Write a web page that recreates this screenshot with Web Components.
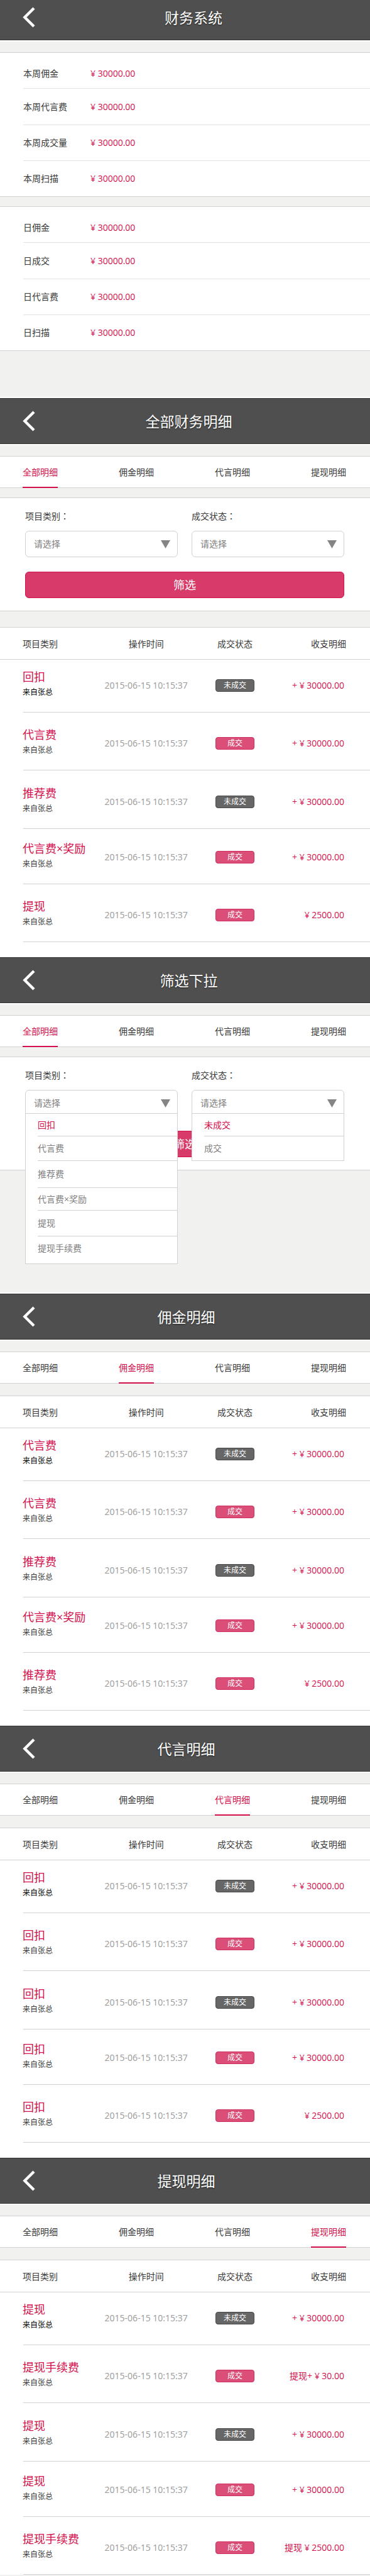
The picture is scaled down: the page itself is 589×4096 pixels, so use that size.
<!DOCTYPE html>
<html lang="zh-CN">
<head>
<meta charset="utf-8">
<meta name="viewport" content="width=device-width, initial-scale=1">
<title>财务系统</title>
<style>
  :root {
    --accent: #d3104b;
    --line: #d2d2d2;
    --ink: #3a3a3a;
    --muted: #808080;
    --canvas: #f1f1ef;
  }
  body {
    margin: 0;
    background: var(--canvas);
    color: var(--ink);
    font: 14px/20px "Open Sans", "Noto Sans CJK SC", sans-serif;
  }
  .overview { padding-bottom: 75px; }
  .dropdowns { padding-bottom: 196px; }
  app-screen:last-of-type { --tail: 0; }
</style>
</head>
<body>

<app-screen class="overview" heading="财务系统" variant="root">
  <stat-list items="本周佣金,本周代言费,本周成交量,本周扫描"></stat-list>
  <stat-list items="日佣金,日成交,日代言费,日扫描"></stat-list>
</app-screen>

<app-screen heading="全部财务明细" variant="filter">
  <tab-bar current="0"></tab-bar>
  <filter-form></filter-form>
  <ledger-table source="all" spaced></ledger-table>
</app-screen>

<app-screen class="dropdowns" heading="筛选下拉" variant="filter">
  <tab-bar current="0"></tab-bar>
  <filter-form expanded></filter-form>
</app-screen>

<app-screen heading="佣金明细">
  <tab-bar current="1"></tab-bar>
  <ledger-table source="commission"></ledger-table>
</app-screen>

<app-screen heading="代言明细">
  <tab-bar current="2"></tab-bar>
  <ledger-table source="endorsement"></ledger-table>
</app-screen>

<app-screen heading="提现明细">
  <tab-bar current="3"></tab-bar>
  <ledger-table source="withdrawal"></ledger-table>
</app-screen>

<script>
  class BaseElement extends HTMLElement {
    connectedCallback() {
      if (!this.shadowRoot) {
        this.attachShadow({ mode: 'open' }).innerHTML = this.render();
      }
    }
  }

  // Screen frame: dark title bar with a back button, then the screen's content.
  class AppScreen extends BaseElement {
    render() {
      return `
        <style>
          :host { display: block; }
          header {
            box-sizing: border-box;
            display: grid;
            align-items: center;
            height: 73px;
            background: #4f4f4f;
            border-top: 1px solid #333;
            border-bottom: 1px solid #333;
            box-shadow: 0 2px 0 #fdfdfd, 0 -2px 0 #fdfdfd;
            margin-bottom: 19px;
          }
          button, h1 { grid-area: 1 / 1; }
          button {
            justify-self: start;
            display: block;
            margin: 0 0 0 36px;
            padding: 0;
            border: 0;
            background: none;
            color: #fff;
          }
          svg { display: block; width: 20px; height: 33px; }
          h1 {
            margin: 0;
            padding-left: 4px;
            text-align: center;
            color: #fff;
            font-size: 23px;
            line-height: 32px;
            font-weight: 400;
            text-shadow: 0 1px 2px #222;
          }
          :host([variant="filter"]) h1 { padding-left: 12px; }
          :host([variant="root"]) h1 { padding-left: 27px; }
          :host([variant="root"]) header {
            height: 64px;
            border-top: 0;
            padding-bottom: 8px;
          }
        </style>
        <header>
          <h1>${this.getAttribute('heading')}</h1>
          <button type="button" aria-label="返回">
            <svg viewBox="0 0 20 33" fill="none" stroke="currentColor" stroke-width="4.4">
              <path d="M18 2 3.4 16.5 18 31"/>
            </svg>
          </button>
        </header>
        <main><slot></slot></main>`;
    }
  }

  // White block of label / amount pairs.
  class StatList extends BaseElement {
    render() {
      const rows = this.getAttribute('items').split(',')
        .map(name => `<div><dt>${name}</dt><dd>¥ 30000.00</dd></div>`).join('');
      return `
        <style>
          :host {
            display: block;
            background: #fff;
            border-top: 1px solid var(--line);
            border-bottom: 1px solid var(--line);
          }
          :host(:not(:first-child)) { margin-top: 15px; }
          dl { margin: 0 0 0 37px; }
          div {
            box-sizing: border-box;
            display: grid;
            grid-template-columns: 107px 1fr;
            align-items: center;
            height: 57px;
            border-bottom: 1px solid #e2e2e2;
          }
          div:first-child { padding-top: 9px; }
          div:nth-child(2) { height: 58px; }
          div:last-child { border-bottom: 0; height: 56px; }
          dd { margin: 0; color: var(--accent); }
        </style>
        <dl>${rows}</dl>`;
    }
  }

  class TabBar extends BaseElement {
    render() {
      const current = Number(this.getAttribute('current'));
      const tabs = ['全部明细', '佣金明细', '代言明细', '提现明细']
        .map((name, i) => `<a href="#"${i === current ? ' aria-current="page"' : ''}>${name}</a>`).join('');
      return `
        <style>
          :host { display: block; }
          nav {
            box-sizing: border-box;
            display: flex;
            justify-content: space-between;
            height: 51px;
            padding: 0 38px 0 36px;
            background: #fff;
            border-top: 1px solid var(--line);
            border-bottom: 1px solid var(--line);
          }
          a {
            box-sizing: border-box;
            height: 50px;
            color: inherit;
            text-decoration: none;
            line-height: 50px;
          }
          a[aria-current] {
            color: var(--accent);
            border-bottom: 2px solid var(--accent);
          }
        </style>
        <nav>${tabs}</nav>`;
    }
  }

  const CATEGORIES = ['回扣', '代言费', '推荐费', '代言费×奖励', '提现', '提现手续费'];
  const STATES = ['未成交', '成交'];

  class FilterForm extends BaseElement {
    field(id, label, options) {
      const menu = this.hasAttribute('expanded')
        ? `<ul role="listbox" aria-label="${label}">${options.map((o, i) =>
            `<li role="option" aria-selected="${i === 0}">${o}</li>`).join('')}</ul>`
        : '';
      return `
        <div class="field">
          <label for="${id}">${label}<span lang="zh-TW">：</span></label>
          <div class="control">
            <select id="${id}"><option>请选择</option></select>
            <svg viewBox="0 0 15 13" aria-hidden="true"><path d="M0 0h15L7.500 13z" fill="#858585"/></svg>
            ${menu}
          </div>
        </div>`;
    }
    render() {
      return `
        <style>
          :host { display: block; margin-top: 15px; }
          form {
            box-sizing: border-box;
            display: grid;
            grid-template-columns: 1fr 1fr;
            gap: 23px 22px;
            padding: 18px 41px 20px 40px;
            background: #fff;
            border-top: 1px solid var(--line);
            border-bottom: 1px solid var(--line);
          }
          label { display: block; height: 20px; line-height: 20px; margin-bottom: 14px; }
          /* The Traditional face centres the colon in its box. */
          label span { font-family: "Noto Sans CJK TC", sans-serif; }
          .control { position: relative; display: grid; align-items: center; }
          select, svg { grid-area: 1 / 1; }
          select {
            appearance: none;
            box-sizing: border-box;
            width: 100%;
            height: 42px;
            margin: 0;
            padding: 0 32px 0 13px;
            border: 1px solid var(--line);
            border-radius: 6px;
            background: #fff;
            color: var(--muted);
            font: inherit;
          }
          svg {
            justify-self: end;
            width: 15px;
            height: 13px;
            margin-right: 12px;
            pointer-events: none;
          }
          ul {
            box-sizing: border-box;
            position: absolute;
            top: 37px;
            left: 0;
            right: 0;
            display: grid;
            grid-template-rows: 36px 39px 43px 36px 41px 43px;
            margin: 0;
            padding: 0 0 0 19px;
            list-style: none;
            background: #fff;
            border: 1px solid var(--line);
            color: var(--muted);
            z-index: 1;
          }
          ul:has(li:nth-child(2):last-child) { grid-template-rows: 36px 38px; }
          li { display: grid; align-items: center; border-bottom: 1px solid var(--line); }
          li:last-child { border-bottom: 0; }
          li:nth-child(6) { padding-bottom: 6px; }
          li[aria-selected="true"] { color: var(--accent); }
          button {
            grid-column: 1 / -1;
            height: 42px;
            padding: 0;
            border: 1px solid var(--accent);
            border-radius: 6px;
            background: #d83a69;
            color: #fff;
            font: inherit;
            font-size: 18px;
          }
        </style>
        <form>
          ${this.field('category', '项目类别', CATEGORIES)}
          ${this.field('state', '成交状态', STATES)}
          <button type="button">筛选</button>
        </form>`;
    }
  }

  const LEDGERS = {
    all: [
      ['回扣', 0, '+ ¥ 30000.00'],
      ['代言费', 1, '+ ¥ 30000.00'],
      ['推荐费', 0, '+ ¥ 30000.00'],
      ['代言费×奖励', 1, '+ ¥ 30000.00'],
      ['提现', 1, '¥ 2500.00']
    ],
    commission: [
      ['代言费', 0, '+ ¥ 30000.00'],
      ['代言费', 1, '+ ¥ 30000.00'],
      ['推荐费', 0, '+ ¥ 30000.00'],
      ['代言费×奖励', 1, '+ ¥ 30000.00'],
      ['推荐费', 1, '¥ 2500.00']
    ],
    endorsement: [
      ['回扣', 0, '+ ¥ 30000.00'],
      ['回扣', 1, '+ ¥ 30000.00'],
      ['回扣', 0, '+ ¥ 30000.00'],
      ['回扣', 1, '+ ¥ 30000.00'],
      ['回扣', 1, '¥ 2500.00']
    ],
    withdrawal: [
      ['提现', 0, '+ ¥ 30000.00'],
      ['提现手续费', 1, '提现+ ¥ 30.00'],
      ['提现', 0, '+ ¥ 30000.00'],
      ['提现', 1, '+ ¥ 30000.00'],
      ['提现手续费', 1, '提现 ¥ 2500.00']
    ]
  };

  class StatusBadge extends BaseElement {
    render() {
      return `
        <style>
          :host {
            box-sizing: border-box;
            display: inline-block;
            vertical-align: top;
            width: 62px;
            height: 20px;
            border: 1px solid #484848;
            border-radius: 4px;
            background: #666;
            color: #fff;
            font-size: 12px;
            line-height: 17px;
            text-align: center;
          }
          :host([done]) { background: #da4e78; border-color: #d02d60; }
        </style>
        <slot></slot>`;
    }
  }

  class LedgerTable extends BaseElement {
    render() {
      const rows = LEDGERS[this.getAttribute('source')].map(([name, done, amount]) => `
        <tr>
          <td><strong>${name}</strong><small>来自张总</small></td>
          <td><time datetime="2015-06-15T10:15:37">2015-06-15 10:15:37</time></td>
          <td><status-badge${done ? ' done' : ''}>${done ? '成交' : '未成交'}</status-badge></td>
          <td>${amount}</td>
        </tr>`).join('');
      return `
        <style>
          :host {
            display: block;
            margin-top: 19px;
            padding-bottom: var(--tail, 24px);
            background: #fff;
            border-top: 1px solid var(--line);
          }
          :host([spaced]) { margin-top: 25px; }
          table { width: 100%; table-layout: fixed; border-spacing: 0; }
          th, td { padding: 0; text-align: center; white-space: nowrap; }
          th { height: 48px; padding-top: 2px; font-weight: 400; border-bottom: 1px solid var(--line); }
          th:first-child, td:first-child { width: 28%; box-sizing: border-box; padding-left: 36px; text-align: left; }
          th:first-child { height: 51px; }
          th:nth-child(2) { width: 23%; }
          th:nth-child(3) { width: 25%; }
          th:last-child { text-align: right; padding-right: 38px; }
          td { box-sizing: border-box; vertical-align: bottom; padding-bottom: 33px; }
          td:first-child { padding-bottom: 23px; }
          td:last-child { text-align: right; padding-right: 41px; color: var(--accent); }
          tbody tr {
            height: 92px;
            background: linear-gradient(var(--line), var(--line)) 37px 100% / 100% 1px no-repeat;
          }
          tbody tr:nth-child(1) { height: 84px; }
          tbody tr:nth-child(3) { height: 93px; }
          tbody tr:nth-child(4) { height: 88px; }
          strong, small { display: block; font-weight: 400; }
          strong { color: var(--accent); font-size: 18px; line-height: 24px; margin-bottom: 4px; }
          small { font-size: 12px; line-height: 18px; }
          tr:first-child small { color: #000; }
          time { color: #999; }
        </style>
        <table>
          <thead><tr><th>项目类别</th><th>操作时间</th><th>成交状态</th><th>收支明细</th></tr></thead>
          <tbody>${rows}</tbody>
        </table>`;
    }
  }

  customElements.define('status-badge', StatusBadge);
  customElements.define('stat-list', StatList);
  customElements.define('tab-bar', TabBar);
  customElements.define('filter-form', FilterForm);
  customElements.define('ledger-table', LedgerTable);
  customElements.define('app-screen', AppScreen);
</script>
</body>
</html>
